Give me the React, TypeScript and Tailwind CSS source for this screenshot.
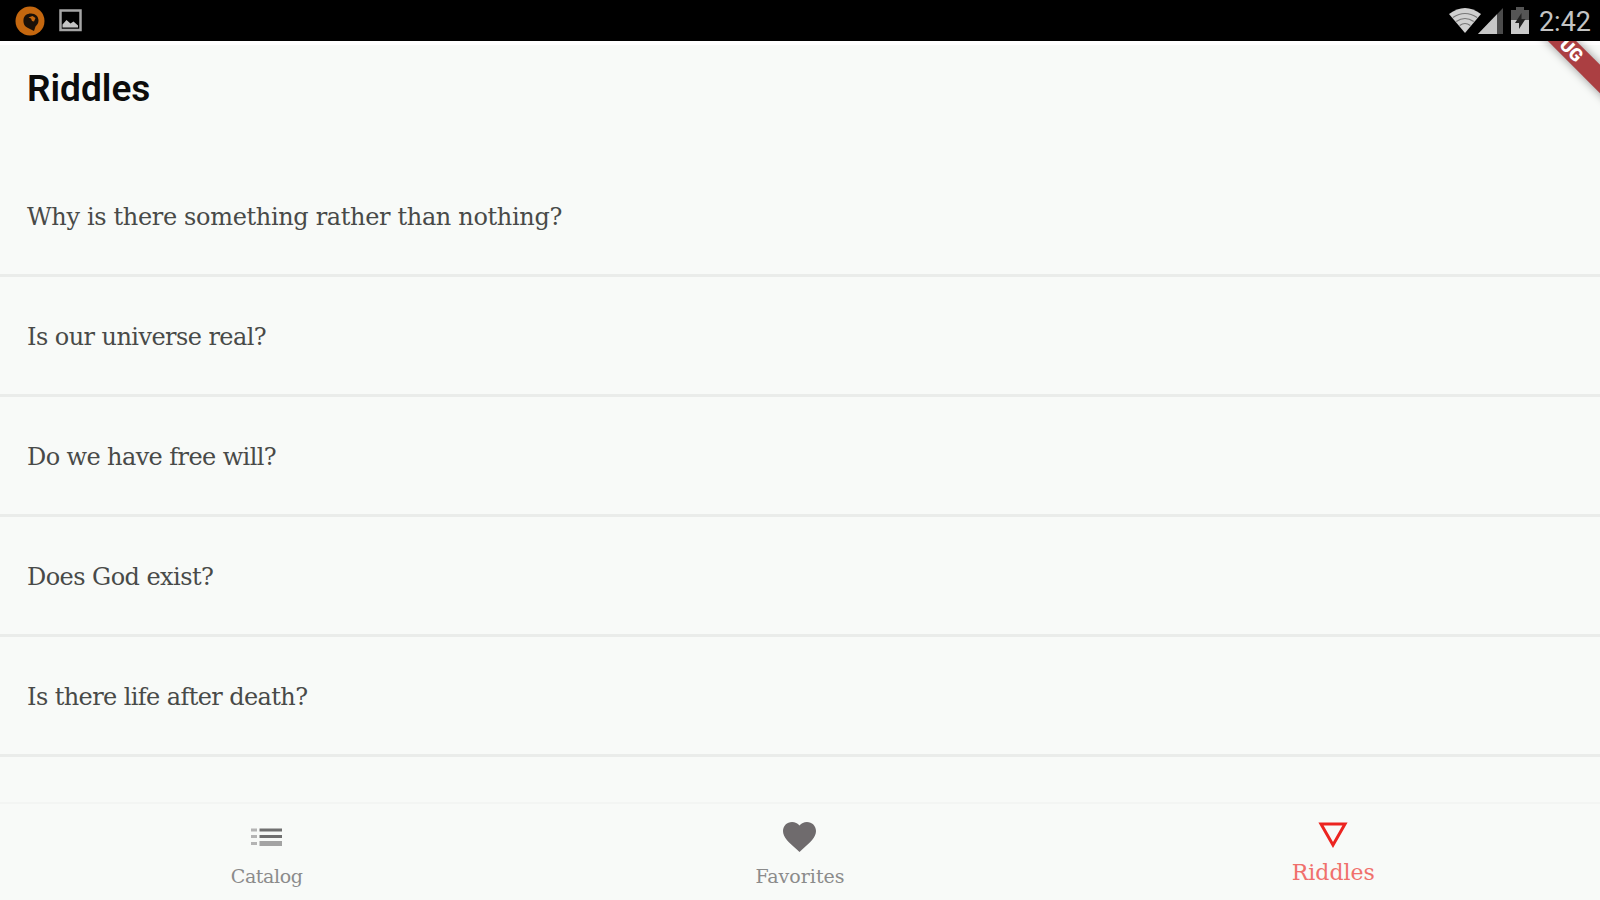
const riddles = [
  { text: 'Why is there something rather than nothing?', tracking: 'tracking-[-0.34px]' },
  { text: 'Is our universe real?', tracking: 'tracking-[-0.56px]' },
  { text: 'Do we have free will?', tracking: 'tracking-[-0.6px]' },
  { text: 'Does God exist?', tracking: 'tracking-[-0.56px]' },
  { text: 'Is there life after death?', tracking: 'tracking-[-0.6px]' },
];

function StatusBar() {
  return (
    <div className="flex h-[41px] shrink-0 items-center justify-between bg-black pl-[15px] pr-[9px]">
      <div className="flex items-center gap-[14px]">
        <svg width="30" height="30" viewBox="0 0 30 30">
          <circle cx="15" cy="15" r="14.5" fill="#c4670f" />
          <path d="M8.500 13.500C9 9.500 12 7.500 16 7.500c4.500 0 7.500 3 7.500 7 0 3-1.500 4.500-3 6l-1.500 4.500-5-2.500c-4-1.500-6-4.500-5.500-9Z" fill="#1a1008" />
          <path d="M13.500 11.500l4-1.500 3 2-1.500 3.500-2-.5-1-2.500Z" fill="#c4670f" />
        </svg>
        <svg width="23" height="23" viewBox="0 0 23 23">
          <rect x="1.500" y="1.500" width="20" height="19.500" fill="none" stroke="#a5a5a5" strokeWidth="2.500" />
          <path d="M3.500 18.500v-3l4-4.500 4 3.500 3-2 4.500 4v2Z" fill="#c4c4c4" />
        </svg>
      </div>
      <div className="flex items-center">
        <svg width="32" height="26" viewBox="0 0 33 26" preserveAspectRatio="none">
          <path d="M0 6Q16.500-6 33 6L16.500 25Z" fill="#d0d0d0" />
          <path d="M4 9.500q12.500-8 25 0M7.500 13.500q9-6 18 0M11 17.500q5.500-4 11 0" fill="none" stroke="#777" strokeWidth="1.200" />
        </svg>
        <svg className="-ml-[3px]" width="26" height="27" viewBox="0 0 26 27">
          <path d="M25 1v26H0Z" fill="#4b4b4b" />
          <path d="M19 7.200V27H0Z" fill="#c6c6c6" />
        </svg>
        <svg className="ml-[6px]" width="20" height="27" viewBox="0 0 20 27">
          <path d="M6 0h8v3h5v24H1V3h5Z" fill="#555" />
          <path d="M1 13h18v14H1Z" fill="#cacaca" />
          <path d="M11.500 6 5 16h4v6l6.500-10h-4Z" fill="#222" />
        </svg>
        <span className="ml-[9px] mt-1 font-[Roboto] text-[27px] leading-none text-[#c4c4c4]">2:42</span>
      </div>
    </div>
  );
}

function DebugRibbon() {
  return (
    <div className="pointer-events-none absolute right-0 top-[41px] h-[100px] w-[140px] overflow-hidden">
      <div className="absolute left-[20px] top-[-12px] flex h-[20px] w-[160px] rotate-45 items-center justify-center bg-[#ab3f42] pl-[32px] font-[Roboto] text-[18px] font-black leading-none text-white shadow-[0_0_10px_rgba(0,0,0,0.4)]">
        UG
      </div>
    </div>
  );
}

function BottomNav() {
  return (
    <nav className="grid h-[98px] shrink-0 grid-cols-3 border-t-2 border-[#f3f5f3] bg-[#f8faf8] text-[#8b8b8b]">
      <div className="flex flex-col items-center">
        <svg className="mt-[23px]" width="32" height="20" viewBox="0 0 32 20">
          <path d="M0 3h6M0 9.500h6M0 16.500h6" stroke="#b4b4b4" strokeWidth="3" />
          <path d="M8.500 3H31M8.500 9.500H31" stroke="#707070" strokeWidth="3.200" />
          <path d="M8.500 16.500H31" stroke="#a3a3a3" strokeWidth="5" />
        </svg>
        <span className="mt-[17px] text-[19px] leading-6 tracking-[-0.4px]">Catalog</span>
      </div>
      <div className="flex flex-col items-center">
        <svg className="mt-[18px]" width="33" height="30" viewBox="2 3 20 18.350" preserveAspectRatio="none">
          <path
            d="M12 21.350l-1.450-1.320C5.400 15.360 2 12.280 2 8.500 2 5.420 4.420 3 7.500 3c1.740 0 3.410.81 4.500 2.090C13.090 3.810 14.760 3 16.500 3 19.580 3 22 5.420 22 8.500c0 3.780-3.400 6.860-8.550 11.540L12 21.350z"
            fill="#6f6b6d"
          />
        </svg>
        <span className="mt-[12px] text-[19px] leading-6">Favorites</span>
      </div>
      <div className="flex flex-col items-center text-[#f0706c]">
        <svg className="mt-[17px]" width="30" height="27" viewBox="0 0 30 27">
          <path d="M3 3h24L15 24Z" fill="none" stroke="#ec2420" strokeWidth="3" />
        </svg>
        <span className="mt-[13px] text-[22px] leading-6">Riddles</span>
      </div>
    </nav>
  );
}

export default function App() {
  return (
    <div className="relative flex h-[900px] w-[1600px] flex-col overflow-hidden bg-[#f8faf8] font-['Roboto_Slab','DejaVu_Serif',serif]">
      <StatusBar />
      <header className="flex h-[116px] shrink-0 items-start border-t-4 border-white pl-[27px] pt-[22px]">
        <h1 className="font-[Roboto] text-[37px] font-semibold leading-[44px] text-[#0c0c0c]">Riddles</h1>
      </header>
      <ul className="min-h-0 flex-1 overflow-hidden">
        {riddles.map(({ text, tracking }) => (
          <li
            key={text}
            className={`flex h-[120px] items-center border-b-[3px] border-[#eaecea] pl-[27px] pt-[3px] text-[24px] text-[#484a48] ${tracking}`}
          >
            {text}
          </li>
        ))}
      </ul>
      <BottomNav />
      <DebugRibbon />
    </div>
  );
}
